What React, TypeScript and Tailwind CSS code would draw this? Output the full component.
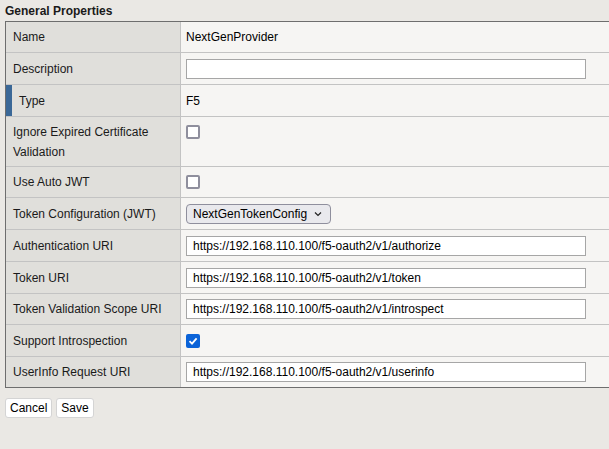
import { ReactNode } from "react";

const FONT = { fontFamily: '"Liberation Sans", Arial, sans-serif' };

function TextInput({ value = "" }: { value?: string }) {
  return (
    <div className="h-[20px] w-[400px] border border-[#a6a6a6] bg-white px-[6px] text-[12px] leading-[18px] text-black">
      {value}
    </div>
  );
}

function Checkbox({ checked = false }: { checked?: boolean }) {
  if (checked) {
    return (
      <div className="flex h-[14px] w-[14px] items-center justify-center rounded-[2px] bg-[#0b63d8]">
        <svg width="10" height="10" viewBox="0 0 10 10">
          <path d="M1.5 5.2 L4 7.6 L8.6 2.4" fill="none" stroke="white" strokeWidth="1.8" />
        </svg>
      </div>
    );
  }
  return <div className="h-[14px] w-[14px] rounded-[2px] border-2 border-[#8f8f9d] bg-white" />;
}

type Row = { label: ReactNode; value: ReactNode; h: string; tall?: boolean; marker?: boolean };

const rows: Row[] = [
  { label: "Name", h: "h-[31px]", value: <span>NextGenProvider</span> },
  { label: "Description", h: "h-[32px]", value: <TextInput /> },
  { label: "Type", h: "h-[32px]", marker: true, value: <span>F5</span> },
  {
    label: (
      <>
        Ignore Expired Certificate
        <br />
        Validation
      </>
    ),
    h: "h-[50px]",
    tall: true,
    value: <Checkbox />,
  },
  { label: "Use Auto JWT", h: "h-[31px]", value: <Checkbox /> },
  {
    label: "Token Configuration (JWT)",
    h: "h-[32px]",
    value: (
      <div className="flex h-[20px] w-[145px] items-center justify-between rounded-[4px] border border-[#8f8f9d] bg-[#e9e9ed] pl-[6px] pr-[8px] text-[12px] text-black">
        <span>NextGenTokenConfig</span>
        <svg width="8" height="6" viewBox="0 0 8 6">
          <path d="M1 1.5 L4 4.5 L7 1.5" fill="none" stroke="#222" strokeWidth="1.2" />
        </svg>
      </div>
    ),
  },
  { label: "Authentication URI", h: "h-[32px]", value: <TextInput value="https://192.168.110.100/f5-oauth2/v1/authorize" /> },
  { label: "Token URI", h: "h-[32px]", value: <TextInput value="https://192.168.110.100/f5-oauth2/v1/token" /> },
  { label: "Token Validation Scope URI", h: "h-[31px]", value: <TextInput value="https://192.168.110.100/f5-oauth2/v1/introspect" /> },
  { label: "Support Introspection", h: "h-[32px]", value: <Checkbox checked /> },
  { label: "UserInfo Request URI", h: "h-[30px]", value: <TextInput value="https://192.168.110.100/f5-oauth2/v1/userinfo" /> },
];

export default function App() {
  return (
    <div className="h-[449px] w-[609px] overflow-hidden bg-[#eae8e4] text-[#1a1a1a]" style={FONT}>
      <div className="pl-[5px]">
        <div className="h-[21px] pt-[4px] text-[12px] font-bold leading-[14px]">General Properties</div>
        <div className="border-l border-t border-b border-[#6e6e6e]">
          {rows.map((r, i) => (
            <div
              key={i}
              className={`flex ${r.h} ${i < rows.length - 1 ? "border-b border-[#c3c3c3]" : ""}`}
            >
              <div
                className={`relative flex w-[175px] shrink-0 border-r border-[#c3c3c3] bg-[#e0dfdb] text-[12px] ${
                  r.tall ? "items-start pt-[5px] leading-[20px]" : "items-center"
                } ${r.marker ? "pl-[13px]" : "pl-[7px]"}`}
              >
                {r.marker && <div className="absolute bottom-0 left-0 top-0 w-[6px] bg-[#3b6897]" />}
                <span>{r.label}</span>
              </div>
              <div
                className={`flex flex-1 bg-[#f6f5f3] pl-[5px] text-[12px] text-black ${
                  r.tall ? "items-start pt-[8px]" : "items-center"
                }`}
              >
                {r.value}
              </div>
            </div>
          ))}
        </div>
        <div className="mt-[10px] flex gap-[4px]">
          {["Cancel", "Save"].map((b) => (
            <button
              key={b}
              className="h-[20px] rounded-[3px] border border-[#d4d4d4] bg-white px-[4px] text-[12px] leading-[18px] text-black"
            >
              {b}
            </button>
          ))}
        </div>
      </div>
    </div>
  );
}
